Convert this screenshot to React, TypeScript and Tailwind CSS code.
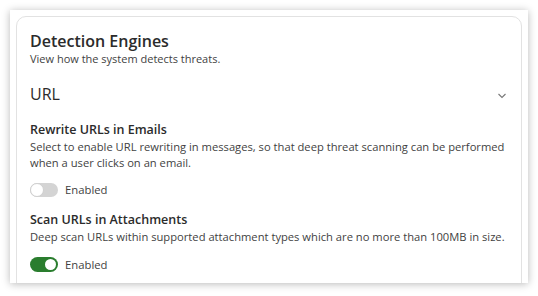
import React from "react";

const Toggle = ({ on }: { on: boolean }) => {
    return (
        <div className="flex items-center gap-[7px]">
            {on ? (
                <div className="w-[28px] h-[15px] rounded-full bg-[#2a7d2e] flex items-center justify-end px-[2px]">
                    <div className="w-[11px] h-[11px] rounded-full bg-white" />
                </div>
            ) : (
                <div className="w-[28px] h-[14px] rounded-full bg-[#d4d4d4] flex items-center justify-start">
                    <div className="w-[14px] h-[14px] rounded-full bg-white border border-[#cfcfcf]" />
                </div>
            )}
            <span className="text-[11.3px] text-[#3f3f3f] leading-[15px]">Enabled</span>
        </div>
    );
};

const App = () => {
    return (
        <div className="w-[538px] h-[296px] bg-white p-[10px] font-['Open_Sans',sans-serif]">
            <div className="h-[273px] w-[518px] bg-white shadow-[0_1px_8px_rgba(0,0,0,0.28)] overflow-hidden pt-[6px] px-[6px]">
                <div className="h-[300px] rounded-[10px] border border-[#e2e2e2] pl-[13px] pr-[4px] pt-[14px]">
                    {/* Header */}
                    <h1 className="text-[16px] font-semibold text-[#2b2b2b] leading-[20px]">Detection Engines</h1>
                    <p className="text-[11px] text-[#3f3f3f] leading-[15px]">View how the system detects threats.</p>

                    {/* URL section */}
                    <div className="flex items-center justify-between mt-[17px] pr-[9px]">
                        <h2 className="text-[16px] text-[#2b2b2b] leading-[22px]">URL</h2>
                        <svg width="10" height="10" viewBox="0 0 10 10" className="mr-[1px] mt-[3px]">
                            <path d="M1.5 3 L5 6.5 L8.5 3" fill="none" stroke="#777" strokeWidth="1.1" />
                        </svg>
                    </div>

                    <div className="mt-[16px]">
                        <h3 className="text-[12.5px] font-semibold text-[#2b2b2b] leading-[18px]">Rewrite URLs in Emails</h3>
                        <p className="text-[11.2px] text-[#3f3f3f] leading-[15.5px]">
                            Select to enable URL rewriting in messages, so that deep threat scanning can be performed
                            when a user clicks on an email.
                        </p>
                        <div className="mt-[12px]">
                            <Toggle on={false} />
                        </div>
                    </div>

                    <div className="mt-[14px]">
                        <h3 className="text-[12.5px] font-semibold text-[#2b2b2b] leading-[18px]">Scan URLs in Attachments</h3>
                        <p className="text-[11.2px] text-[#3f3f3f] leading-[15.5px]">
                            Deep scan URLs within supported attachment types which are no more than 100MB in size.
                        </p>
                        <div className="mt-[12px]">
                            <Toggle on={true} />
                        </div>
                    </div>
                </div>
            </div>
        </div>
    );
};

export default App;
